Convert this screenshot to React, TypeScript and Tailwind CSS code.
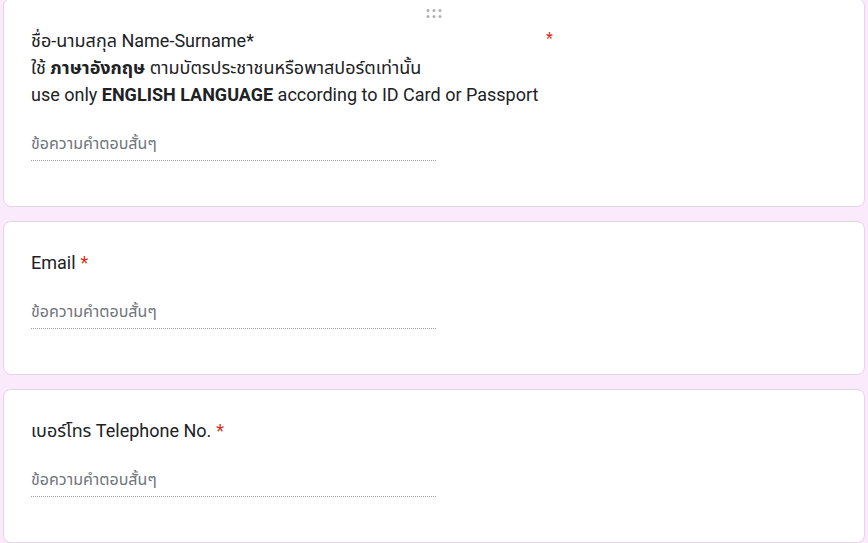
import React from 'react';

const font = { fontFamily: 'Roboto, "Noto Sans", "Noto Sans Thai", "Leelawadee UI", Tahoma, sans-serif' };

function Star() {
  return <span className="text-[#d93025] ml-[5px]">*</span>;
}

function ShortAnswer() {
  return (
    <div className="mt-[24px] w-[405px] border-b border-dotted border-[#9aa0a6] pb-[4px]">
      <div className="h-[24px] leading-[24px] text-[16px] text-[#70757a]">ข้อความคำตอบสั้นๆ</div>
    </div>
  );
}

function Card({ children, className = '' }: { children: React.ReactNode; className?: string }) {
  return (
    <div className={`relative bg-white border border-[#e3d6e3] rounded-[8px] px-[27px] pt-[27px] pb-[45px] ${className}`}>
      {children}
    </div>
  );
}

function DragHandle() {
  return (
    <div className="absolute left-1/2 top-[10px] -translate-x-1/2 grid grid-cols-3 gap-x-[3px] gap-y-[3px]">
      {Array.from({ length: 6 }).map((_, i) => (
        <span key={i} className="w-[3px] h-[3px] rounded-full bg-[#b0b0b0]" />
      ))}
    </div>
  );
}

export default function App() {
  return (
    <div className="h-[543px] overflow-hidden bg-[#fbeafb] px-[3px] flex flex-col gap-[14px]" style={font}>
      <Card className="-mt-[2px] pt-[28px] pb-[44px]">
        <DragHandle />
        <div className="flex items-start">
          <div className="w-[510px] text-[18px] leading-[27px] text-[#202124]">
            <div>ชื่อ-นามสกุล Name-Surname*</div>
            <div>
              ใช้ <b>ภาษาอังกฤษ</b> ตามบัตรประชาชนหรือพาสปอร์ตเท่านั้น
            </div>
            <div>
              use only <b>ENGLISH LANGUAGE</b> according to ID Card or Passport
            </div>
          </div>
          <span className="text-[#d93025] text-[16px] leading-[24px] ml-[5px]">*</span>
        </div>
        <ShortAnswer />
      </Card>

      <Card>
        <div className="text-[18px] leading-[27px] text-[#202124]">
          Email
          <Star />
        </div>
        <ShortAnswer />
      </Card>

      <Card>
        <div className="text-[18px] leading-[27px] text-[#202124]">
          เบอร์โทร Telephone No.
          <Star />
        </div>
        <ShortAnswer />
      </Card>
    </div>
  );
}
